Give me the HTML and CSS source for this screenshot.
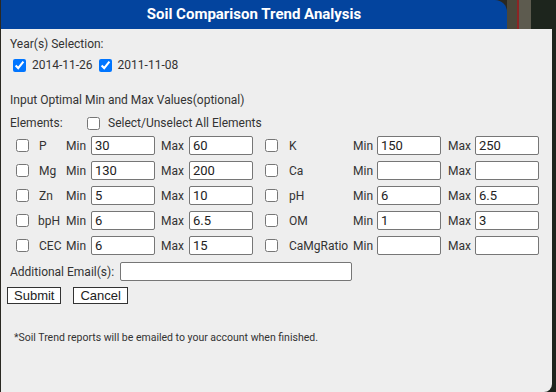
FILE: index.html
```html
<!DOCTYPE html>
<html lang="en">
  <head>
    <meta charset="UTF-8" />
    <title>Soil Comparison Trend Analysis</title>
    <link rel="stylesheet" href="styles.css">
  </head>
  <body>
    <div class="dialog">
      <div class="title">Soil Comparison Trend Analysis</div>

      <div class="panel">
        <div class="line">Year(s) Selection:</div>
        <div class="years">
          <label class="year"><input type="checkbox" checked /><span>2014-11-26</span></label>
          <label class="year"><input type="checkbox" checked /><span>2011-11-08</span></label>
        </div>

        <div class="line intro">Input Optimal Min and Max Values(optional)</div>
        <div class="elements">
          <span class="elements-label">Elements:</span>
          <input type="checkbox" />
          <span class="all">Select/Unselect All Elements</span>
        </div>

        <div class="grid">
          <input type="checkbox" /><span>P</span><span>Min</span><input type="text" value="30" /><span>Max</span><input type="text" value="60" />
          <input type="checkbox" /><span>K</span><span>Min</span><input type="text" value="150" /><span>Max</span><input type="text" value="250" />

          <input type="checkbox" /><span>Mg</span><span>Min</span><input type="text" value="130" /><span>Max</span><input type="text" value="200" />
          <input type="checkbox" /><span>Ca</span><span>Min</span><input type="text" value="" /><span>Max</span><input type="text" value="" />

          <input type="checkbox" /><span>Zn</span><span>Min</span><input type="text" value="5" /><span>Max</span><input type="text" value="10" />
          <input type="checkbox" /><span>pH</span><span>Min</span><input type="text" value="6" /><span>Max</span><input type="text" value="6.5" />

          <input type="checkbox" /><span class="tight">bpH</span><span>Min</span><input type="text" value="6" /><span>Max</span><input type="text" value="6.5" />
          <input type="checkbox" /><span>OM</span><span>Min</span><input type="text" value="1" /><span>Max</span><input type="text" value="3" />

          <input type="checkbox" /><span>CEC</span><span>Min</span><input type="text" value="6" /><span>Max</span><input type="text" value="15" />
          <input type="checkbox" /><span>CaMgRatio</span><span>Min</span><input type="text" value="" /><span>Max</span><input type="text" value="" />
        </div>

        <div class="email">
          <span class="email-label">Additional Email(s):</span>
          <input type="text" class="email-input" />
        </div>

        <div class="buttons">
          <button>Submit</button>
          <button>Cancel</button>
        </div>

        <p class="note">*Soil Trend reports will be emailed to your account when finished.</p>
      </div>
    </div>
  </body>
</html>
```

FILE: styles.css
```css
body {
  margin: 0;
  height: 392px;
  overflow: hidden;
  font-family: Roboto, "Liberation Sans", sans-serif;
  font-size: 12px;
  color: #333;
  background: linear-gradient(to right, #2a2822 0 507px, #4a473a 507px 517px, #8c2424 517px 519px, #5d5b4f 519px 531px, #1d251d 531px);
}
.dialog {
  margin-left: 1px;
  width: 551px;
}
.title {
  width: 506px;
  height: 29px;
  line-height: 29px;
  background-color: #03449e;
  border-top-right-radius: 12px;
  color: white;
  font-size: 15px;
  font-weight: bold;
  text-align: center;
}
.panel {
  height: 363px;
  box-sizing: border-box;
  background-color: #eeeeee;
  border-bottom-right-radius: 8px;
  padding: 7px 9px 0;
}
.line {
  line-height: 16px;
}
input[type="checkbox"] {
  width: 13px;
  height: 13px;
  margin: 0;
}
.years {
  display: flex;
  align-items: center;
  height: 16px;
  margin-top: 5px;
}
.year {
  display: flex;
  align-items: center;
}
.year input {
  margin-left: 3px;
  margin-right: 6px;
}
.year span {
  margin-right: 3px;
}
.intro {
  margin-top: 19px;
}
.elements {
  display: flex;
  align-items: center;
  height: 16px;
  margin-top: 7px;
}
.elements-label {
  width: 77px;
}
.elements .all {
  margin-left: 8px;
}
.grid {
  display: grid;
  grid-template-columns: 23px 27px 25px 70px 28px 76px 24px 64px 24px 71px 27px 64px;
  grid-auto-rows: 25px;
  align-items: center;
  margin: 2px 0 0 6px;
}
.grid .tight {
  margin-left: -1px;
}
input[type="text"] {
  box-sizing: border-box;
  width: 64px;
  height: 19px;
  padding: 0 3px;
  border: 1px solid #767676;
  border-radius: 2px;
  background: white;
  font-family: Roboto, "Liberation Sans", sans-serif;
  font-size: 13px;
  color: #222;
}
.email {
  display: flex;
  align-items: center;
  margin-top: 4px;
}
.email-label {
  width: 110px;
}
.email input.email-input {
  width: 232px;
}
.buttons {
  display: flex;
  gap: 12px;
  margin: 6px 0 0 -3px;
}
button {
  height: 17px;
  padding: 0 6px;
  border: 1px solid #333;
  border-radius: 0;
  background-color: white;
  font-family: "Liberation Sans", Arial, sans-serif;
  font-size: 13px;
  color: #222;
}
.note {
  margin: 27px 0 0 4px;
  font-size: 10.5px;
  line-height: 14px;
}
```
